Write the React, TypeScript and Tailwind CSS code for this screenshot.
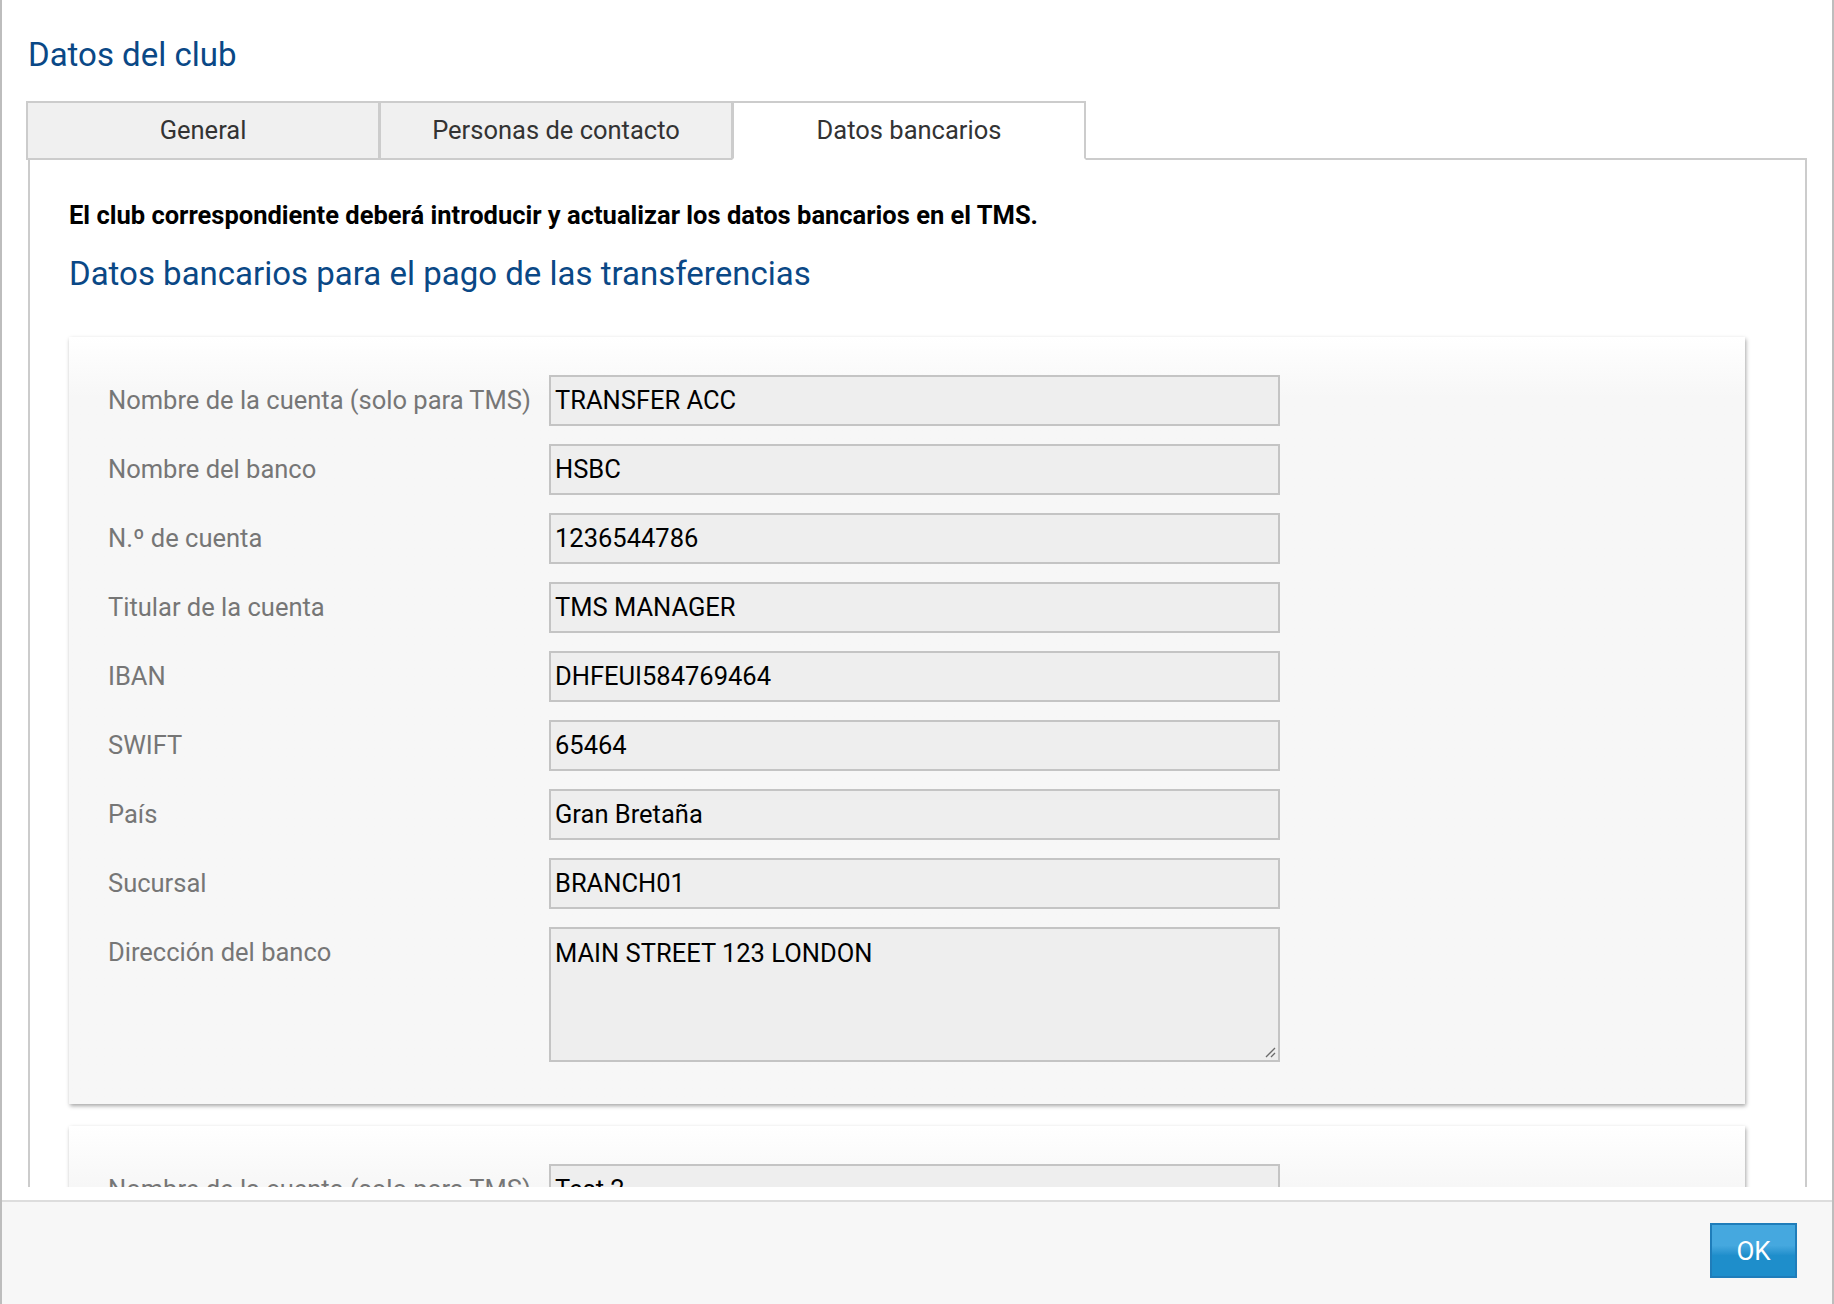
import React from 'react';

type Field = {
  label: string;
  value: string;
  multiline?: boolean;
};

const primaryAccount: Field[] = [
  { label: 'Nombre de la cuenta (solo para TMS)', value: 'TRANSFER ACC' },
  { label: 'Nombre del banco', value: 'HSBC' },
  { label: 'N.º de cuenta', value: '1236544786' },
  { label: 'Titular de la cuenta', value: 'TMS MANAGER' },
  { label: 'IBAN', value: 'DHFEUI584769464' },
  { label: 'SWIFT', value: '65464' },
  { label: 'País', value: 'Gran Bretaña' },
  { label: 'Sucursal', value: 'BRANCH01' },
  { label: 'Dirección del banco', value: 'MAIN STREET 123 LONDON', multiline: true },
];

const secondAccount: Field[] = [
  { label: 'Nombre de la cuenta (solo para TMS)', value: 'Test 2' },
  { label: 'Nombre del banco', value: 'BARCLAYS' },
];

const tabs = ['General', 'Personas de contacto', 'Datos bancarios'];

function FieldRow({ field }: { field: Field }) {
  return (
    <div className="flex items-start">
      <label className="w-[441px] shrink-0 h-[51px] leading-[51px] text-[25.5px] text-[#767676]">
        {field.label}
      </label>
      {field.multiline ? (
        <div className="relative w-[731px] h-[135px] border-2 border-[#c4c4c4] bg-[#eeeeee] px-[4px] pt-[10px] text-[25.5px] leading-[29px] text-black">
          {field.value}
          {/* resize grip */}
          <svg className="absolute right-[2px] bottom-[2px]" width="12" height="12" viewBox="0 0 12 12">
            <path d="M11 2 L2 11 M11 7 L7 11" stroke="#6b6b6b" strokeWidth="1.3" />
          </svg>
        </div>
      ) : (
        <div className="w-[731px] h-[51px] border-2 border-[#c4c4c4] bg-[#eeeeee] px-[4px] leading-[47px] text-[25.5px] text-black">
          {field.value}
        </div>
      )}
    </div>
  );
}

function AccountCard({ fields }: { fields: Field[] }) {
  return (
    <div className="w-[1676px] bg-gradient-to-b from-white to-[#f7f7f7] to-[60px] shadow-[1px_2px_4px_rgba(0,0,0,0.35)] pl-[39px] pt-[38px] pb-[42px] flex flex-col gap-[18px]">
      {fields.map((f) => (
        <FieldRow key={f.label} field={f} />
      ))}
    </div>
  );
}

export default function App() {
  return (
    <div className="w-full h-[1304px] flex flex-col bg-white border-x-2 border-[#bdbdbd] font-['Roboto',sans-serif] overflow-hidden">
      <div className="h-[1200px] shrink-0 pl-[24px] pr-[25px] pb-[13px] flex flex-col">
        <div className="flex-1 overflow-hidden flex flex-col">
          <h1 className="ml-[2px] mt-[35px] text-[33px] leading-[40px] text-[#0a4886]">Datos del club</h1>

          {/* tab strip */}
          <div className="mt-[26px] flex relative z-10 -mb-[2px]">
            {tabs.map((t, i) => {
              const active = i === tabs.length - 1;
              return (
                <div
                  key={t}
                  className={`w-[354px] h-[59px] border-2 border-[#cccccc] flex items-center justify-center text-[25.5px] text-[#333] ${
                    i > 0 ? '-ml-px' : ''
                  } ${active ? 'bg-white border-b-white' : 'bg-[#f0f0f0]'}`}
                >
                  {t}
                </div>
              );
            })}
          </div>

          <div className="ml-[2px] flex-1 border-x-2 border-t-2 border-[#cccccc] pl-[39px] pt-[40px]">
            <p className="text-[25.5px] leading-[30px] font-bold text-black">
              El club correspondiente deberá introducir y actualizar los datos bancarios en el TMS.
            </p>
            <h2 className="mt-[25px] text-[33px] leading-[38px] text-[#0a4886]">
              Datos bancarios para el pago de las transferencias
            </h2>
            <div className="mt-[44px] flex flex-col gap-[22px]">
              <AccountCard fields={primaryAccount} />
              <AccountCard fields={secondAccount} />
            </div>
          </div>
        </div>
      </div>

      <div className="flex-1 border-t-2 border-[#dddddd] bg-[#f7f7f7] flex justify-end items-start pt-[21px] pr-[35px]">
        <button className="w-[87px] h-[55px] border-2 border-[#1f7dba] bg-gradient-to-b from-[#45a8df] from-40% to-[#1e8ecb] to-60% text-white text-[26px] leading-none">
          OK
        </button>
      </div>
    </div>
  );
}
